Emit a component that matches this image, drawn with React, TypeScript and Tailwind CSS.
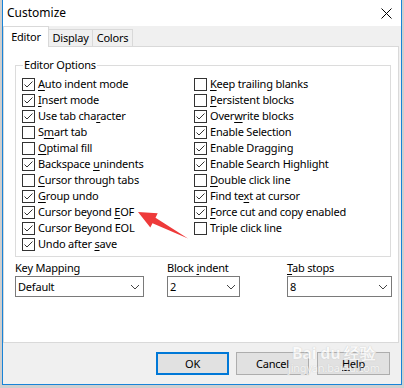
import type { ReactNode } from "react";

type Opt = [string, number, boolean];

const leftOpts: Opt[] = [
  ["Auto indent mode", 0, true],
  ["Insert mode", 0, true],
  ["Use tab character", 11, true],
  ["Smart tab", 1, false],
  ["Optimal fill", 0, false],
  ["Backspace unindents", 10, true],
  ["Cursor through tabs", 0, false],
  ["Group undo", 0, true],
  ["Cursor beyond EOF", 14, true],
  ["Cursor Beyond EOL", -1, true],
  ["Undo after save", 11, true],
];

const rightOpts: Opt[] = [
  ["Keep trailing blanks", 0, false],
  ["Persistent blocks", 0, false],
  ["Overwrite blocks", 4, true],
  ["Enable Selection", -1, true],
  ["Enable Dragging", -1, true],
  ["Enable Search Highlight", -1, true],
  ["Double click line", 0, false],
  ["Find text at cursor", 7, true],
  ["Force cut and copy enabled", 0, true],
  ["Triple click line", -1, false],
];

// label with the access-key letter underlined
function Accel({ text, at }: { text: string; at: number }) {
  if (at < 0) return <>{text}</>;
  return (
    <>
      {text.slice(0, at)}
      <span className="underline underline-offset-[2px]">{text[at]}</span>
      {text.slice(at + 1)}
    </>
  );
}

function CheckRow({ opt }: { opt: Opt }) {
  const [label, at, checked] = opt;
  return (
    <div className="flex h-[16px] items-center">
      <span className="flex h-[13px] w-[13px] shrink-0 items-center justify-center border border-[#333] bg-white">
        {checked && (
          <svg width="11" height="11" viewBox="0 0 11 11">
            <polyline points="1.5,5.5 4,8 9.5,2.5" fill="none" stroke="#333" strokeWidth="1" />
          </svg>
        )}
      </span>
      <span className="ml-[3px] whitespace-nowrap">
        <Accel text={label} at={at} />
      </span>
    </div>
  );
}

function Combo({ label, value, width }: { label: ReactNode; value: string; width: string }) {
  return (
    <div className="flex flex-col">
      <div className="h-[16px] leading-[16px]">{label}</div>
      <div className={`flex h-[21px] items-center justify-between border border-[#7a7a7a] bg-white pl-[2px] pr-[3px] ${width}`}>
        <span>{value}</span>
        <svg width="10" height="6" viewBox="0 0 10 6">
          <polyline points="1,1 5,5 9,1" fill="none" stroke="#444" strokeWidth="1" />
        </svg>
      </div>
    </div>
  );
}

export default function App() {
  return (
    <div
      className="relative h-[388px] w-[404px] overflow-hidden bg-[#cfcfcf] text-[11px] leading-[16px] tracking-[-0.2px] text-black"
      style={{ fontFamily: '"Noto Sans", "Open Sans", sans-serif' }}
    >
      <div className="ml-[2px] flex h-[385px] w-[400px] flex-col border border-t-0 border-[#1883d7] bg-[#f0f0f0]">
        {/* title bar */}
        <div className="flex h-[26px] items-center justify-between bg-white pl-[4px] pr-[9px]">
          <span className="text-[12px] tracking-normal">Customize</span>
          <svg width="11" height="11" viewBox="0 0 11 11">
            <path d="M0.5,0.5 L10.5,10.5 M10.5,0.5 L0.5,10.5" stroke="#000" strokeWidth="1" />
          </svg>
        </div>

        {/* tabs */}
        <div className="flex h-[20px] items-end">
          <div className="relative z-10 -mb-[1px] flex h-[21px] w-[46px] items-center justify-center border border-b-0 border-[#d9d9d9] bg-white pb-[1px]">
            Editor
          </div>
          <div className="flex h-[17px] w-[44px] items-center justify-center border border-b-0 border-l-0 border-[#d9d9d9]">
            Display
          </div>
          <div className="flex h-[17px] w-[40px] items-center justify-center border border-b-0 border-l-0 border-[#d9d9d9]">
            Colors
          </div>
        </div>

        {/* tab page */}
        <div className="flex h-[297px] w-[396px] flex-col border border-[#d9d9d9] bg-white px-[11px]">
          <fieldset className="mt-[10px] w-[376px] border border-[#dcdcdc] pb-[4px] pl-[6px] pt-[3px]">
            <legend className="ml-[1px] px-[1px]">Editor Options</legend>
            <div className="grid grid-cols-[172px_1fr]">
              <div className="flex flex-col">
                {leftOpts.map((o) => (
                  <CheckRow key={o[0]} opt={o} />
                ))}
              </div>
              <div className="flex flex-col">
                {rightOpts.map((o) => (
                  <CheckRow key={o[0]} opt={o} />
                ))}
              </div>
            </div>
          </fieldset>

          <div className="mt-[3px] flex">
            <Combo label="Key Mapping" value="Default" width="w-[129px]" />
            <div className="ml-[23px]">
              <Combo label={<Accel text="Block indent" at={6} />} value="2" width="w-[73px]" />
            </div>
            <div className="ml-[47px]">
              <Combo label={<Accel text="Tab stops" at={0} />} value="8" width="w-[105px]" />
            </div>
          </div>
        </div>

        {/* buttons */}
        <div className="mt-[9px] flex justify-end gap-[7px] pr-[11px]">
          <button className="h-[23px] w-[73px] border-2 border-[#0078d7] bg-[#e1e1e1]">OK</button>
          <button className="h-[23px] w-[73px] border border-[#adadad] bg-[#e1e1e1]">Cancel</button>
          <button className="ml-[1px] h-[23px] w-[73px] border border-[#adadad] bg-[#e1e1e1]">
            <Accel text="Help" at={0} />
          </button>
        </div>
      </div>

      {/* watermark */}
      <div className="pointer-events-none absolute left-[288px] top-[344px] flex flex-col items-center text-white opacity-70 [text-shadow:0_0_1px_#aaa]">
        <span className="text-[16px] font-bold leading-[18px]">Bai du 经验</span>
        <span className="text-[11px] leading-[12px]">jingyan.baidu.com</span>
      </div>

      {/* red arrow annotation */}
      <svg className="pointer-events-none absolute left-0 top-0" width="404" height="388">
        <polygon
          points="138,212 157.7,213.2 155.5,217.8 188,238.5 152.5,223.3 150.3,227.4"
          fill="#ee3a3a"
        />
      </svg>
    </div>
  );
}
